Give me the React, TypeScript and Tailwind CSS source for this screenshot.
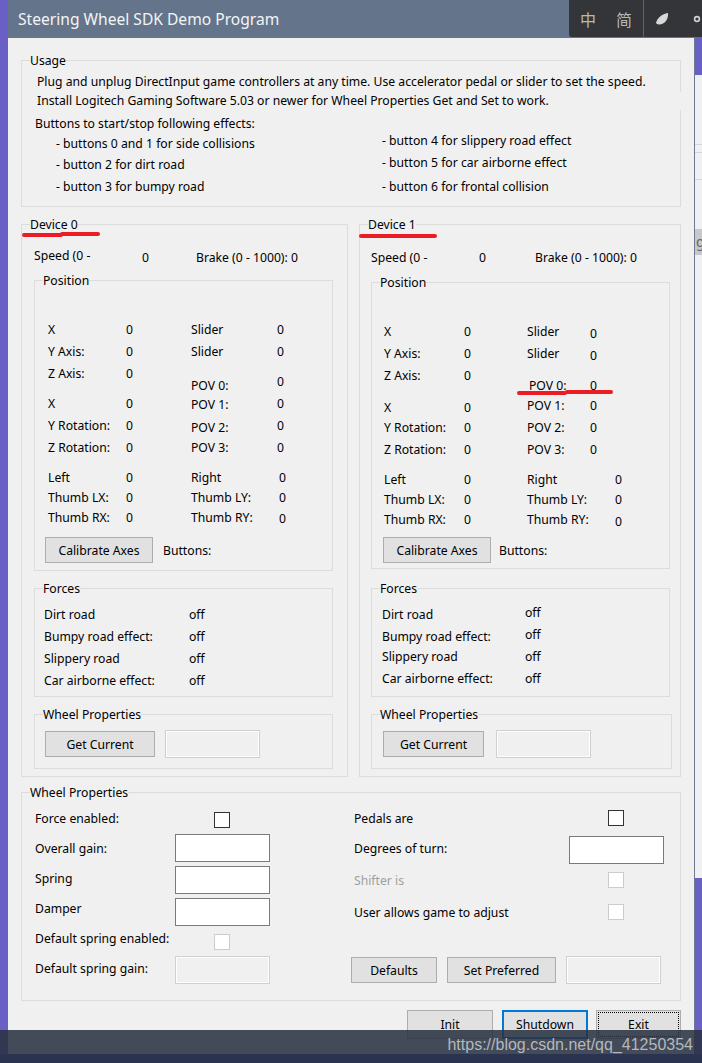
import type { ReactNode } from "react";

const font = "font-['Noto_Sans',sans-serif]";

function Group({ title, className, children }: { title: string; className: string; children?: ReactNode }) {
  return (
    <div className={`relative border border-[#dcdcdc] ${className}`}>
      <span className="absolute left-[8px] top-[-8px] bg-[#f0f0f0] leading-[16px] whitespace-nowrap">{title}</span>
      {children}
    </div>
  );
}

function Btn({ label, className }: { label: string; className: string }) {
  return (
    <div className={`flex items-center justify-center border border-[#adadad] bg-[#e1e1e1] pt-[1px] ${className}`}>{label}</div>
  );
}

type Cell = { label: string; row?: string; labelClass?: string; valueClass?: string };

const left0: Cell[] = [
  { label: "X" },
  { label: "Y Axis:" },
  { label: "Z Axis:" },
  { label: "X", row: "mt-[8px]" },
  { label: "Y Rotation:" },
  { label: "Z Rotation:" },
  { label: "Left", row: "mt-[8px]" },
  { label: "Thumb LX:", row: "mt-[-2px]" },
  { label: "Thumb RX:", row: "mt-[-2px]" },
];

const right0: Cell[] = [
  { label: "Slider" },
  { label: "Slider" },
  { label: "POV 0:", row: "mt-[8px]", labelClass: "mt-[4px]" },
  { label: "POV 1:", labelClass: "mt-[1px]" },
  { label: "POV 2:", labelClass: "mt-[2px]" },
  { label: "POV 3:" },
  { label: "Right", row: "mt-[8px]", labelClass: "w-[88px]" },
  { label: "Thumb LY:", row: "mt-[-2px]", labelClass: "w-[88px]" },
  { label: "Thumb RY:", row: "mt-[-2px]", labelClass: "w-[88px]", valueClass: "mt-[1px]" },
];

const left1: Cell[] = [
  { label: "X" },
  { label: "Y Axis:" },
  { label: "Z Axis:" },
  { label: "X", row: "mt-[10px]" },
  { label: "Y Rotation:", row: "mt-[-2px]" },
  { label: "Z Rotation:" },
  { label: "Left", row: "mt-[8px]" },
  { label: "Thumb LX:", row: "mt-[-2px]" },
  { label: "Thumb RX:", row: "mt-[-2px]" },
];

const right1: Cell[] = [
  { label: "Slider", valueClass: "mt-[2px]" },
  { label: "Slider", valueClass: "mt-[2px]" },
  { label: "POV 0:", row: "mt-[10px]", labelClass: "pl-[2px]" },
  { label: "POV 1:", row: "mt-[-2px]" },
  { label: "POV 2:" },
  { label: "POV 3:" },
  { label: "Right", row: "mt-[8px]", labelClass: "w-[88px]" },
  { label: "Thumb LY:", row: "mt-[-2px]", labelClass: "w-[88px]" },
  { label: "Thumb RY:", row: "mt-[-2px]", labelClass: "w-[88px]", valueClass: "mt-[2px]" },
];

function Column({ cells, labelWidth, className }: { cells: Cell[]; labelWidth: string; className: string }) {
  return (
    <div className={className}>
      {cells.map((c, i) => (
        <div key={i} className={`flex h-[22px] leading-[22px] ${c.row ?? ""}`}>
          <span className={`whitespace-nowrap ${labelWidth} ${c.labelClass ?? ""}`}>{c.label}</span>
          <span className={c.valueClass}>0</span>
        </div>
      ))}
    </div>
  );
}

function Position({ second }: { second?: boolean }) {
  return (
    <div className={`pt-[38px] ${second ? "pl-[12px]" : "pl-[13px]"}`}>
      <div className="flex">
        <Column cells={second ? left1 : left0} labelWidth={second ? "w-[80px]" : "w-[78px]"} className="w-[143px]" />
        <Column cells={second ? right1 : right0} labelWidth={second ? "w-[63px]" : "w-[86px]"} className="" />
      </div>
      <div className={`flex items-center ${second ? "mt-[6px] ml-[-1px] gap-[8px]" : "mt-[8px] ml-[-3px] gap-[10px]"}`}>
        <Btn label="Calibrate Axes" className="h-[26px] w-[108px]" />
        <span className="pt-[1px]">Buttons:</span>
      </div>
    </div>
  );
}

function Forces({ second }: { second?: boolean }) {
  const rows = [
    { label: "Dirt road", nudge: "mt-[2px]" },
    { label: "Bumpy road effect:", nudge: "mt-[2px]" },
    { label: "Slippery road", nudge: "" },
    { label: "Car airborne effect:", nudge: "" },
  ];
  return (
    <div className={second ? "pt-[13px] pl-[10px] leading-[22px]" : "pt-[15px] pl-[9px] leading-[22px]"}>
      {rows.map((r) => (
        <div key={r.label} className="flex h-[22px]">
          <span className={`${second ? "w-[143px] " + r.nudge : "w-[145px]"}`}>{r.label}</span>
          <span>off</span>
        </div>
      ))}
    </div>
  );
}

function Device({ n, second }: { n: number; second?: boolean }) {
  return (
    <Group title={`Device ${n}`} className={second ? "w-[322px] h-[553px]" : "w-[327px] h-[553px]"}>
      {second ? (
        <span className="absolute left-[-1px] top-[9px] h-[4px] w-[78px] rounded-full bg-[#ed1c24]" />
      ) : (
        <>
          <span className="absolute left-0 top-[8px] h-[4px] w-[41px] rounded-full bg-[#ed1c24]" />
          <span className="absolute left-[38px] top-[7px] h-[4px] w-[40px] rounded-full bg-[#ed1c24]" />
        </>
      )}
      <div className={`flex pt-[25px] leading-[16px] ${second ? "pl-[11px]" : "pl-[12px]"}`}>
        <span className={second ? "w-[108px]" : "mt-[-2px] w-[108px]"}>Speed (0 -</span>
        <span className={second ? "w-[56px]" : "w-[54px]"}>0</span>
        <span>Brake (0 - 1000): 0</span>
      </div>
      <Group title="Position" className={second ? "mt-[16px] ml-[11px] w-[299px] h-[287px]" : "mt-[14px] ml-[12px] w-[299px] h-[291px]"}>
        <Position second={second} />
        {second && (
          <>
            <span className="absolute left-[145px] top-[108px] h-[4px] w-[50px] rounded-full bg-[#ed1c24]" />
            <span className="absolute left-[193px] top-[107px] h-[4px] w-[48px] rounded-full bg-[#ed1c24]" />
          </>
        )}
      </Group>
      <Group title="Forces" className={second ? "mt-[19px] ml-[11px] w-[299px] h-[109px]" : "mt-[17px] ml-[12px] w-[299px] h-[109px]"}>
        <Forces second={second} />
      </Group>
      <Group title="Wheel Properties" className={second ? "mt-[17px] ml-[11px] w-[301px] h-[55px]" : "mt-[17px] ml-[12px] w-[299px] h-[55px]"}>
        <div className={`flex items-center pt-[15px] ${second ? "gap-[12px] pl-[11px]" : "gap-[10px] pl-[10px]"}`}>
          <Btn label="Get Current" className={`h-[26px] ${second ? "w-[101px]" : "w-[110px]"}`} />
          <Field disabled />
        </div>
      </Group>
    </Group>
  );
}

function Field({ disabled, className }: { disabled?: boolean; className?: string }) {
  return (
    <div
      className={`h-[28px] w-[95px] shrink-0 border ${
        disabled ? "border-[#d0d0d0] bg-[#f0f0f0] shadow-[inset_0_0_0_1px_#ffffff]" : "border-[#7a7a7a] bg-white"
      } ${className ?? ""}`}
    />
  );
}

function Check({ disabled, className }: { disabled?: boolean; className?: string }) {
  return (
    <div className={`h-[16px] w-[16px] border ${disabled ? "border-[#cccccc]" : "border-[#333333]"} bg-white ${className ?? ""}`} />
  );
}

function Bullets() {
  return (
    <div className="flex pl-[34px]">
      <div className="w-[326px]">
        <div className="mt-[4px]">- buttons 0 and 1 for side collisions</div>
        <div className="mt-[5px]">- button 2 for dirt road</div>
        <div className="mt-[6px]">- button 3 for bumpy road</div>
      </div>
      <div className="mt-[1px]">
        <div>- button 4 for slippery road effect</div>
        <div className="mt-[6px]">- button 5 for car airborne effect</div>
        <div className="mt-[8px]">- button 6 for frontal collision</div>
      </div>
    </div>
  );
}

function BackgroundEdge() {
  return (
    <div className="absolute right-0 top-[75px] h-[803px] w-[8px] overflow-hidden bg-[#f0f0f0]">
      <div className="mt-[69px] h-px bg-[#d4d4d4]" />
      <div className="mt-[7px] h-px bg-[#d4d4d4]" />
      <div className="mt-[26px] h-px bg-[#d4d4d4]" />
      <div className="mt-[49px] h-[26px] bg-[#c8c8c8] pl-[2px] text-[14px] leading-[26px] text-[#666666]">g</div>
    </div>
  );
}

function ImeBar() {
  return (
    <div className="absolute right-0 top-0 flex h-[37px] w-[133px] items-center rounded-bl-[3px] bg-[#333538] pl-[11px] text-[#b8b8b8]">
      <span className="w-[36px] font-['Noto_Sans_CJK_SC'] text-[16px]">中</span>
      <span className="w-[27px] font-['Noto_Sans_CJK_SC'] text-[16px]">简</span>
      <div className="h-[37px] w-px bg-[#5a6470]" />
      <svg width="14" height="14" viewBox="0 0 14 14" className="ml-[11px]">
        <path d="M1 11 C2 6 7 2 13 1 C13.5 7 10 12 5 12.5 C3.5 12.5 2 12 1 11 Z" fill="#d8d8d8" />
      </svg>
      <svg width="8" height="8" viewBox="0 0 8 8" className="ml-[24px]">
        <circle cx="4" cy="4" r="2.4" fill="none" stroke="#d0d0d0" strokeWidth="1.6" />
      </svg>
    </div>
  );
}

export default function App() {
  return (
    <div className={`relative h-[1063px] w-[702px] overflow-hidden bg-[#6a5fc5] text-[12.2px] leading-[16px] text-black ${font}`}>
      <BackgroundEdge />
      <div className="relative ml-[8px] h-[1054px] w-[687px] border-r border-[#6b7a90] bg-[#f0f0f0]">
        <div className="flex h-[38px] items-center bg-[#64748a] pl-[10px] text-[15.6px] text-[#f2f4f6]">Steering Wheel SDK Demo Program</div>
        <div className="pl-[13px] pt-[22px]">
          <Group title="Usage" className="h-[147px] w-[660px]">
            <span className="absolute right-[-1px] top-[31px] h-[18px] w-px bg-[#f0f0f0]" />
            <div className="pt-[13px] pl-[15px]">
              <div className="whitespace-nowrap">Plug and unplug DirectInput game controllers at any time. Use accelerator pedal or slider to set the speed.</div>
              <div className="mt-[3px]">Install Logitech Gaming Software 5.03 or newer for Wheel Properties Get and Set to work.</div>
              <div className="mt-[7px] ml-[-2px]">Buttons to start/stop following effects:</div>
            </div>
            <Bullets />
          </Group>
          <div className="mt-[17px] flex gap-[11px]">
            <Device n={0} />
            <Device n={1} second />
          </div>
          <Group title="Wheel Properties" className="mt-[15px] h-[209px] w-[660px]">
            <div className="flex pt-[13px] pl-[13px]">
              <div className="w-[319px]">
                <div className="flex h-[26px] items-center"><span className="w-[179px]">Force enabled:</span><Check className="mt-[2px]" /></div>
                <div className="mt-[2px] flex items-center"><span className="mt-[2px] w-[140px]">Overall gain:</span><Field /></div>
                <div className="mt-[4px] flex items-center"><span className="mb-[2px] w-[140px]">Spring</span><Field /></div>
                <div className="mt-[4px] flex items-center"><span className="mb-[6px] w-[140px]">Damper</span><Field /></div>
                <div className="mt-[2px] flex h-[22px] items-center"><span className="w-[179px]">Default spring enabled:</span><Check disabled className="mt-[6px]" /></div>
                <div className="mt-[6px] flex items-center"><span className="mb-[2px] w-[140px]">Default spring gain:</span><Field disabled /></div>
              </div>
              <div className="w-[320px]">
                <div className="flex h-[26px] items-center"><span className="w-[254px]">Pedals are</span><Check className="mb-[2px]" /></div>
                <div className="mt-[4px] flex items-center"><span className="mb-[2px] w-[215px]">Degrees of turn:</span><Field /></div>
                <div className="mt-[8px] flex h-[16px] items-center"><span className="mt-[2px] w-[254px] text-[#a0a0a0]">Shifter is</span><Check disabled /></div>
                <div className="mt-[16px] flex h-[16px] items-center"><span className="mt-[2px] w-[254px]">User allows game to adjust</span><Check disabled /></div>
                <div className="mt-[36px] ml-[-3px] flex items-center gap-[10px]">
                  <Btn label="Defaults" className="h-[26px] w-[86px]" />
                  <Btn label="Set Preferred" className="h-[26px] w-[109px]" />
                  <Field disabled />
                </div>
              </div>
            </div>
          </Group>
          <div className="mt-[9px] ml-[386px] flex">
            <Btn label="Init" className="h-[29px] w-[86px]" />
            <div className="ml-[9px] flex h-[29px] w-[86px] items-center justify-center border-2 border-[#0078d7] bg-[#e1e1e1]">Shutdown</div>
            <div className="ml-[8px] h-[29px] w-[85px] border border-[#adadad] bg-[#e1e1e1] p-[1px]">
              <div className="flex h-full items-center justify-center border border-dotted border-black">Exit</div>
            </div>
          </div>
        </div>
      </div>
      <ImeBar />
      <div className="absolute bottom-[9px] left-0 h-[24px] w-full bg-[rgba(41,49,65,0.87)]" />
      <div className="absolute bottom-0 left-0 h-[9px] w-full bg-[#2a3350]" />
      <span className="absolute bottom-[10px] right-[9px] font-['Liberation_Sans',sans-serif] text-[16px] text-[#b4b8bf]">https://blog.csdn.net/qq_41250354</span>
    </div>
  );
}
